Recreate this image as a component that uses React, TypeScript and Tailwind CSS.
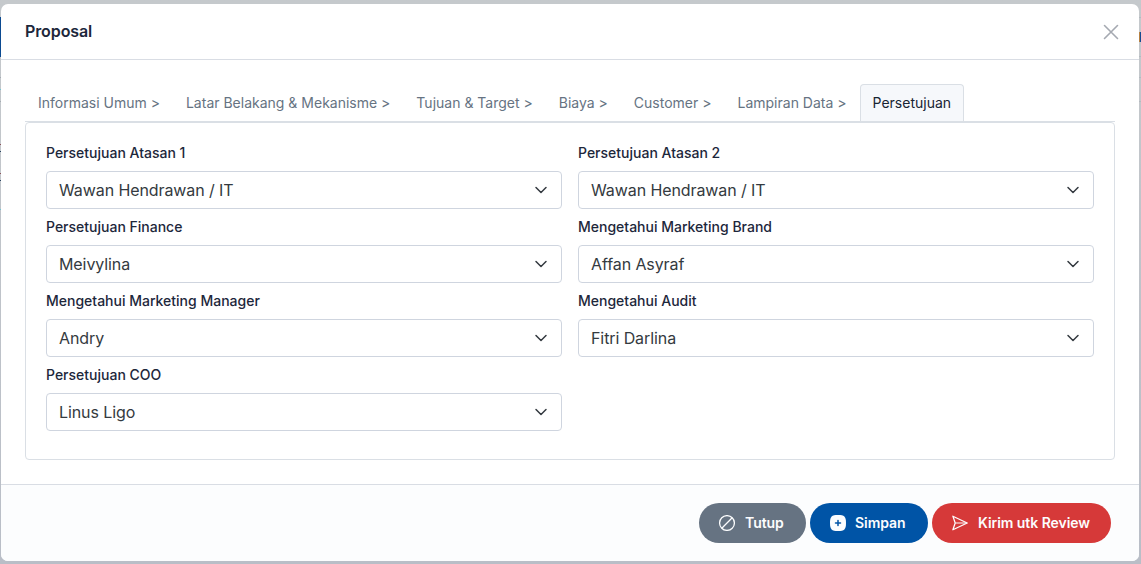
import type { ReactNode } from "react";

const tabs = [
  "Informasi Umum >",
  "Latar Belakang & Mekanisme >",
  "Tujuan & Target >",
  "Biaya >",
  "Customer >",
  "Lampiran Data >",
];

const fields = [
  { label: "Persetujuan Atasan 1", value: "Wawan Hendrawan / IT" },
  { label: "Persetujuan Atasan 2", value: "Wawan Hendrawan / IT" },
  { label: "Persetujuan Finance", value: "Meivylina" },
  { label: "Mengetahui Marketing Brand", value: "Affan Asyraf" },
  { label: "Mengetahui Marketing Manager", value: "Andry" },
  { label: "Mengetahui Audit", value: "Fitri Darlina" },
  { label: "Persetujuan COO", value: "Linus Ligo" },
];

function Field({ label, value }: { label: string; value: string }) {
  return (
    <div>
      <div className="mb-2 text-sm leading-5 font-medium">{label}</div>
      <button className="flex h-[38px] w-full items-center justify-between rounded-[4px] border border-[#cfd5df] bg-white px-3 text-base tracking-[-0.09px] text-[#343a40]">
        <span>{value}</span>
        <svg className="size-4" viewBox="0 0 16 16" fill="none" stroke="#343a40" strokeWidth="1.5" strokeLinecap="round" strokeLinejoin="round">
          <path d="m3 5.5 5 5 5-5" />
        </svg>
      </button>
    </div>
  );
}

function Pill({ className, children }: { className: string; children: ReactNode }) {
  return (
    <button className={`flex h-10 items-center rounded-full text-sm font-semibold tracking-[-0.05px] text-[#fcfdfe] ${className}`}>
      {children}
    </button>
  );
}

export default function App() {
  return (
    <div className="flex h-[564px] w-[1141px] bg-linear-to-b from-[#c5c9cc] to-[#b9bec7] pt-1 font-['Inter',sans-serif] text-[#1d273b] antialiased">
      <div className="w-px shrink-0 pt-[13px]">
        <div className="h-10 bg-[#0b4a91]" />
        <div className="mt-5 h-px bg-[#a5abb2]" />
        <div className="mt-[11px] h-px bg-[#72c5d3]" />
        <div className="mt-[11px] h-px bg-[#a5abb2]" />
        <div className="mt-[42px] h-px bg-[#895258]" />
        <div className="mt-[6px] h-px bg-[#294461]" />
        <div className="mt-[21px] h-px bg-[#895258]" />
        <div className="mt-[6px] h-px bg-[#294461]" />
        <div className="mt-[28px] h-px bg-[#72c5d3]" />
      </div>
      <div className="flex h-[557px] w-[1138px] shrink-0 flex-col overflow-hidden rounded-[7px] bg-white">
        <header className="flex h-14 shrink-0 items-center justify-between border-b border-[#d9dde4] pr-5 pl-6">
          <h1 className="pb-0.5 text-base font-semibold tracking-[-0.1px]">Proposal</h1>
          <svg className="size-4" viewBox="0 0 16 16" fill="none" stroke="#a5a9b1" strokeWidth="1.6" strokeLinecap="round">
            <path d="m1.5 1.5 13 13m0-13-13 13" />
          </svg>
        </header>
        <main className="grow px-6 pt-6">
          <nav className="flex h-[38px] border-b border-[#dadfe5] text-sm text-[#667382]">
            {tabs.map((tab) => (
              <div key={tab} className="flex items-center px-[13px]">{tab}</div>
            ))}
            <div className="flex items-center rounded-t-[4px] border border-b-0 border-[#dadfe5] bg-[#f6f8fb] px-3 text-[#182433]">
              Persetujuan
            </div>
          </nav>
          <section className="grid h-[338px] grid-cols-2 content-start gap-x-4 gap-y-2 rounded-[4px] border border-[#dadfe5] p-5">
            {fields.map((field) => (
              <Field key={field.label} {...field} />
            ))}
          </section>
        </main>
        <footer className="flex h-[77px] shrink-0 items-center justify-end gap-1 border-t border-[#d9dde4] bg-[#fcfdfe] pr-7">
          <Pill className="w-[107px] gap-2.5 bg-[#667382] pl-5">
            <svg className="size-4" viewBox="0 0 16 16" fill="none" stroke="currentColor" strokeWidth="1.25">
              <circle cx="8" cy="8" r="7.4" />
              <path d="m2.8 13.2 10.4-10.4" />
            </svg>
            Tutup
          </Pill>
          <Pill className="w-[118px] gap-[9px] bg-[#0054a6] pl-5">
            <svg className="size-4" viewBox="0 0 16 16">
              <path fill="currentColor" d="M8 0C14.4 0 16 1.6 16 8s-1.6 8-8 8-8-1.6-8-8 1.6-8 8-8Z" />
              <path d="M8 5.5v5M5.5 8h5" stroke="#0054a6" strokeWidth="1.5" strokeLinecap="round" />
            </svg>
            Simpan
          </Pill>
          <Pill className="w-[179px] gap-2.5 bg-[#d63939] pl-5">
            <svg className="size-4" viewBox="0 0 16 16" fill="none" stroke="currentColor" strokeWidth="1.25" strokeLinejoin="round">
              <path d="M.9 1.2 15.2 8 .9 14.8 3.2 8 .9 1.2Z" />
              <path d="M3.2 8h12" strokeWidth="1" />
            </svg>
            Kirim utk Review
          </Pill>
        </footer>
      </div>
      <div className="w-0.5 shrink-0 pt-[13px]">
        <div className="h-px bg-[#b4bac0]" />
        <div className="mt-3.5 flex h-2.5">
          <div className="w-px bg-[#b68142]" />
          <div className="w-px bg-[#174c91]" />
        </div>
        <div className="mt-3.5 h-px bg-[#b4bac0]" />
        <div className="mt-5 h-px bg-[#b4bac0]" />
        <div className="mt-[23px] h-px bg-[#b4bac0]" />
      </div>
    </div>
  );
}
